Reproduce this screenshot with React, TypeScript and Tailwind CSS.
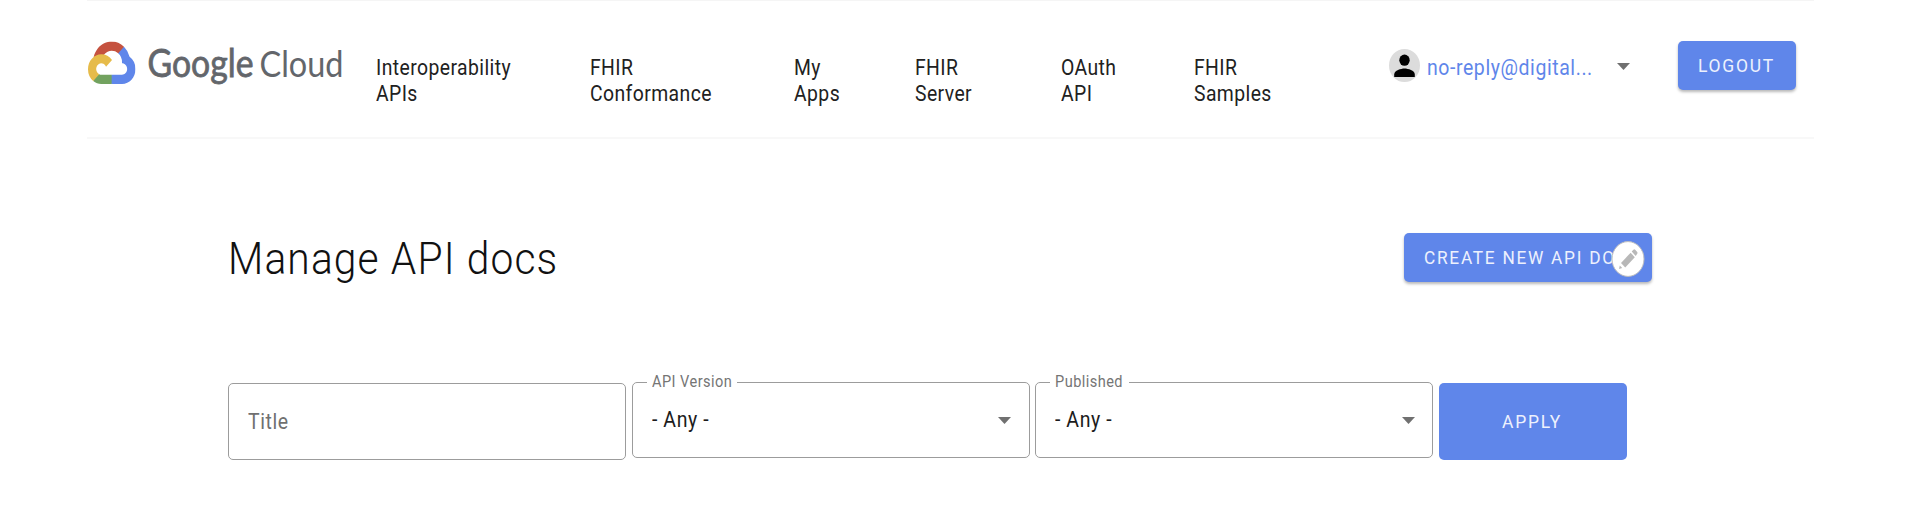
import React from "react";

const navItems = [
  { lines: ["Interoperability", "APIs"], width: "w-[213.5px]" },
  { lines: ["FHIR", "Conformance"], width: "w-[204px]" },
  { lines: ["My", "Apps"], width: "w-[121px]" },
  { lines: ["FHIR", "Server"], width: "w-[146px]" },
  { lines: ["OAuth", "API"], width: "w-[133px]" },
  { lines: ["FHIR", "Samples"], width: "w-[194px]" },
];

function Logo() {
  return (
    <svg className="mt-[34px] h-[60px] w-[260px] shrink-0 overflow-visible" viewBox="0 -5 260 60" aria-label="Google Cloud">
      <svg x="1" y="1.5" width="47.5" height="42.5" viewBox="0 0 256 206" preserveAspectRatio="none">
        <path fill="#c5523f" d="M170.252 56.819l22.253-22.253 1.483-9.37C153.437-11.677 88.976-7.496 52.42 33.92 42.267 45.423 34.734 59.764 30.717 74.573l7.97-1.123 44.505-7.34 3.436-3.513c19.797-21.742 53.27-24.667 76.128-6.168l7.496.39z" />
        <path fill="#5f86ea" d="M224.205 73.918a100.249 100.249 0 0 0-30.217-48.722l-31.232 31.232a55.515 55.515 0 0 1 20.379 44.037v5.544c15.35 0 27.797 12.445 27.797 27.796 0 15.352-12.446 27.485-27.797 27.485h-55.671l-5.466 5.934v33.34l5.466 5.231h55.67c39.93.311 72.553-31.494 72.864-71.424a72.303 72.303 0 0 0-31.793-60.453" />
        <path fill="#72a25f" d="M71.87 205.796h55.593V161.29H71.87a27.275 27.275 0 0 1-11.4-2.498l-7.887 2.42-22.409 22.253-1.952 7.574c12.567 9.489 27.9 14.825 43.647 14.757" />
        <path fill="#e6bb4a" d="M71.87 61.425C31.94 61.664-.237 94.228.001 134.158a72.301 72.301 0 0 0 28.222 56.88l32.248-32.246c-13.99-6.322-20.208-22.786-13.887-36.776 6.32-13.99 22.786-20.208 36.775-13.888a27.796 27.796 0 0 1 13.887 13.888l32.248-32.248A72.224 72.224 0 0 0 71.87 61.425" />
      </svg>
      <g fill="#63666b" fontFamily="Lato, sans-serif">
        <text x="60.5" y="36.5" fontSize="39" stroke="#63666b" strokeWidth="0.8" textLength="106" lengthAdjust="spacingAndGlyphs">Google</text>
        <text x="172.5" y="36.5" fontSize="36" textLength="84" lengthAdjust="spacingAndGlyphs">Cloud</text>
      </g>
    </svg>
  );
}

function Caret() {
  return (
    <svg className="h-[7px] w-[13px] shrink-0" viewBox="0 0 13 7" preserveAspectRatio="none">
      <path d="M0 0h13L6.5 7z" fill="#707070" />
    </svg>
  );
}

function SelectField({ label, labelWidth }: { label: string; labelWidth: string }) {
  return (
    <fieldset className="mt-[-10px] flex h-[86px] w-[398px] shrink-0 flex-col rounded-[5px] border-[1.5px] border-[#9c9c9c]">
      <legend className={`ml-[14px] h-5 pl-[5px] ${labelWidth}`}>
        <span className="inline-block origin-left scale-x-[0.9] whitespace-nowrap align-top text-[16.2px] leading-5 tracking-[0.031em] text-[#757575]">
          {label}
        </span>
      </legend>
      <div className="mt-[14px] flex items-center justify-between pl-[19px] pr-[17.5px]">
        <span className="origin-left scale-x-[0.905] whitespace-nowrap text-[21.5px] leading-7 tracking-[0.03em] text-[#1c1c1c]">
          - Any -
        </span>
        <Caret />
      </div>
    </fieldset>
  );
}

export default function App() {
  return (
    <div className="h-[512px] w-[1928px] overflow-hidden bg-white font-[Roboto,sans-serif]">
      <header className="ml-[87px] flex h-[139px] w-[1727px] items-start border-b-2 border-t border-b-[#f8f8f8] border-t-[#f5f5f5]">
        <Logo />
        <nav className="ml-[29px] mt-[54px] flex">
          {navItems.map((item, i) => (
            <a key={i} className={`block shrink-0 ${item.width}`}>
              {item.lines.map((line) => (
                <span
                  key={line}
                  className="block origin-left scale-x-[0.9] whitespace-nowrap text-[21.5px] leading-[26px] tracking-[0.022em] text-[#212121]"
                >
                  {line}
                </span>
              ))}
            </a>
          ))}
        </nav>
        <svg className="ml-[1.5px] mt-12 h-[33px] w-[31px] shrink-0" viewBox="0 0 31 33">
          <ellipse cx="15.5" cy="16.5" rx="15.5" ry="16.5" fill="#dcdcdc" />
          <ellipse cx="15.5" cy="11.2" rx="5.2" ry="5.6" fill="#000" />
          <path d="M5.2 28v-2.6c0-3.7 6.8-5.8 10.3-5.8s10.3 2.1 10.3 5.8V28z" fill="#000" />
        </svg>
        <div className="ml-[7px] mt-[54px] flex w-[191px] shrink-0 items-start">
          <span className="w-[190px] shrink-0 origin-left scale-x-[0.905] whitespace-nowrap text-[21.5px] leading-[26px] tracking-[0.03em] text-[#5f86ea]">
            no-reply@digital...
          </span>
          <div className="flex h-[23px] items-center">
            <Caret />
          </div>
        </div>
        <button className="ml-[60px] mt-10 flex h-[49px] w-[118px] shrink-0 items-center rounded-[5px] bg-[#5f86ea] pl-5 shadow-[0_2px_3px_rgba(0,0,0,0.28)]">
          <span className="origin-left scale-x-[0.93] whitespace-nowrap text-[18.8px] leading-6 tracking-[0.1em] text-[#edf1fd]">LOGOUT</span>
        </button>
      </header>

      <main className="ml-[228px] w-[1424px]">
        <div className="flex h-[143px] items-end justify-between">
          <h1 className="h-[50px] origin-left scale-x-[0.905] whitespace-nowrap text-[45px] font-light leading-[54px] tracking-[0.028em] text-[#111111]">
            Manage API docs
          </h1>
          <button className="relative flex h-[49px] w-[248px] shrink-0 items-center rounded-[5px] bg-[#5f86ea] pl-5 shadow-[0_2px_3px_rgba(0,0,0,0.28)]">
            <span className="origin-left scale-x-[0.92] whitespace-nowrap text-[18.8px] leading-6 tracking-[0.1em] text-[#edf1fd]">CREATE NEW API DOC</span>
            <svg className="absolute right-[7px] top-2 h-9 w-[34px]" viewBox="0 0 34 36">
              <ellipse cx="17" cy="18" rx="16" ry="17.4" fill="#fff" stroke="#bdbdbd" strokeWidth="1" />
              <g fill="#b8b8b8">
                <path d="M10 22l9.6-10.3 4.2 4.5-9.6 10.3z" />
                <path d="M20.7 10.5l1.7-1.8q.9-.8 1.8 0l2 2.2q.8 1 0 1.9l-1.5 2.1z" />
                <path d="M8.8 24.4l2.4 2.6-3.2.9z" />
              </g>
            </svg>
          </button>
        </div>

        <form className="mt-[100px] flex items-start gap-[5.5px]">
          <div className="mt-px flex h-[77px] w-[398px] shrink-0 items-center rounded-[5px] border-[1.5px] border-[#9c9c9c] pl-[19px]">
            <span className="origin-left scale-x-[0.905] text-[21.5px] leading-7 tracking-[0.03em] text-[#707070]">Title</span>
          </div>
          <SelectField label="API Version" labelWidth="w-[90px]" />
          <SelectField label="Published" labelWidth="w-[79px]" />
          <button type="button" className="mt-px flex h-[77px] w-[188px] shrink-0 items-center rounded-[5px] bg-[#5f86ea] pl-[63px]">
            <span className="origin-left scale-x-[0.93] text-[18.8px] leading-6 tracking-[0.1em] text-[#edf1fd]">APPLY</span>
          </button>
        </form>
      </main>
    </div>
  );
}
